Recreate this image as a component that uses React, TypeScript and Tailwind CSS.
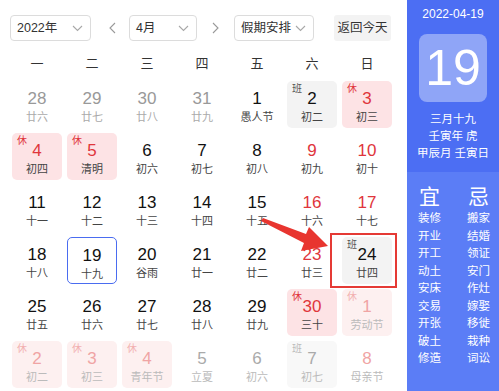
import React from "react";

type Cell = {
  d: string;
  l: string;
  kind?: "normal" | "prev" | "next";
  red?: boolean;
  tag?: "休" | "班";
  sel?: boolean;
};

const rows: Cell[][] = [
  [
    { d: "28", l: "廿六", kind: "prev" },
    { d: "29", l: "廿七", kind: "prev" },
    { d: "30", l: "廿八", kind: "prev" },
    { d: "31", l: "廿九", kind: "prev" },
    { d: "1", l: "愚人节" },
    { d: "2", l: "初二", tag: "班" },
    { d: "3", l: "初三", tag: "休", red: true },
  ],
  [
    { d: "4", l: "初四", tag: "休", red: true },
    { d: "5", l: "清明", tag: "休", red: true },
    { d: "6", l: "初六" },
    { d: "7", l: "初七" },
    { d: "8", l: "初八" },
    { d: "9", l: "初九", red: true },
    { d: "10", l: "初十", red: true },
  ],
  [
    { d: "11", l: "十一" },
    { d: "12", l: "十二" },
    { d: "13", l: "十三" },
    { d: "14", l: "十四" },
    { d: "15", l: "十五" },
    { d: "16", l: "十六", red: true },
    { d: "17", l: "十七", red: true },
  ],
  [
    { d: "18", l: "十八" },
    { d: "19", l: "十九", sel: true },
    { d: "20", l: "谷雨" },
    { d: "21", l: "廿一" },
    { d: "22", l: "廿二" },
    { d: "23", l: "廿三", red: true },
    { d: "24", l: "廿四", tag: "班" },
  ],
  [
    { d: "25", l: "廿五" },
    { d: "26", l: "廿六" },
    { d: "27", l: "廿七" },
    { d: "28", l: "廿八" },
    { d: "29", l: "廿九" },
    { d: "30", l: "三十", tag: "休", red: true },
    { d: "1", l: "劳动节", tag: "休", red: true, kind: "next" },
  ],
  [
    { d: "2", l: "初二", tag: "休", red: true, kind: "next" },
    { d: "3", l: "初三", tag: "休", red: true, kind: "next" },
    { d: "4", l: "青年节", tag: "休", red: true, kind: "next" },
    { d: "5", l: "立夏", kind: "next" },
    { d: "6", l: "初六", kind: "next" },
    { d: "7", l: "初七", tag: "班", kind: "next" },
    { d: "8", l: "母亲节", red: true, kind: "next" },
  ],
];

const yi = ["装修", "开业", "开工", "动土", "安床", "交易", "开张", "破土", "修造"];
const ji = ["搬家", "结婚", "领证", "安门", "作灶", "嫁娶", "移徙", "栽种", "词讼"];

function Chevron() {
  return (
    <svg width="11" height="7" viewBox="0 0 11 7" fill="none">
      <path d="M1 1l4.5 4.5L10 1" stroke="#a8a8a8" strokeWidth="1.1" />
    </svg>
  );
}

function DayCell({ c }: { c: Cell }) {
  const next = c.kind === "next";
  const prev = c.kind === "prev";
  let bg = "bg-white";
  if (c.tag === "休") bg = next ? "bg-[#fdf0f0]" : "bg-[#fde3e5]";
  else if (c.tag === "班") bg = next ? "bg-[#f8f8f8]" : "bg-[#f3f3f3]";
  let numColor = "text-[#111]";
  let lunColor = "text-[#444]";
  if (prev) {
    numColor = "text-[#999]";
    lunColor = "text-[#aaa]";
  } else if (next) {
    numColor = c.red ? "text-[#f0a4a4]" : "text-[#aaa]";
    lunColor = "text-[#bbb]";
  } else if (c.red) {
    numColor = "text-[#e0363c]";
  }
  const tagColor =
    c.tag === "休"
      ? next
        ? "text-[#f2b0b0]"
        : "text-[#e0363c]"
      : next
        ? "text-[#bbb]"
        : "text-[#555]";
  return (
    <div
      className={`relative h-[47px] w-[50px] rounded-[5px] flex flex-col items-center pt-[8px] ${bg} ${
        c.sel ? "border-[1.5px] border-[#4a6cf0] pt-[6.5px]" : ""
      }`}
    >
      {c.tag && (
        <span className={`absolute left-[5px] top-[2px] text-[10px] leading-[12px] ${tagColor}`}>
          {c.tag}
        </span>
      )}
      <span className={`text-[17px] leading-[20px] ${numColor}`}>{c.d}</span>
      <span className={`text-[11px] leading-[14px] mt-[1px] ${lunColor}`}>{c.l}</span>
    </div>
  );
}

export default function App() {
  return (
    <div
      className="w-[499px] h-[391px] bg-white flex overflow-hidden"
      style={{ fontFamily: '"Liberation Sans", "Noto Sans CJK SC", sans-serif' }}
    >
      <div className="relative flex-1 flex flex-col">
        {/* top bar */}
        <div className="flex items-center pt-[10px] pl-[10px] h-[36px] box-content">
          <div className="w-[81px] h-[26px] border border-[#dcdcdc] rounded-[4px] flex items-center justify-between pl-[6px] pr-[7px] text-[12.5px] text-[#333]">
            <span>2022年</span>
            <Chevron />
          </div>
          <span className="ml-[18px] text-[#999]">
            <svg width="7" height="12" viewBox="0 0 7 12" fill="none">
              <path d="M6 1L1 6l5 5" stroke="#999" strokeWidth="1.1" />
            </svg>
          </span>
          <div className="ml-[13px] w-[68px] h-[26px] border border-[#dcdcdc] rounded-[4px] flex items-center justify-between pl-[6px] pr-[7px] text-[12.5px] text-[#333]">
            <span>4月</span>
            <Chevron />
          </div>
          <span className="ml-[15px]">
            <svg width="7" height="12" viewBox="0 0 7 12" fill="none">
              <path d="M1 1l5 5-5 5" stroke="#999" strokeWidth="1.1" />
            </svg>
          </span>
          <div className="ml-[15px] w-[80px] h-[26px] border border-[#dcdcdc] rounded-[4px] flex items-center justify-between pl-[6px] pr-[7px] text-[12.5px] text-[#333]">
            <span>假期安排</span>
            <Chevron />
          </div>
          <div className="ml-[20px] w-[57px] h-[26px] rounded-[3px] bg-[#f3f3f3] flex items-center justify-center text-[12.5px] text-[#333]">
            返回今天
          </div>
        </div>
        {/* weekdays */}
        <div className="grid grid-cols-[repeat(7,50px)] gap-x-[5px] pl-[12px] h-[35px] items-center text-[13px] text-[#333]">
          {["一", "二", "三", "四", "五", "六", "日"].map((w) => (
            <div key={w} className="text-center">
              {w}
            </div>
          ))}
        </div>
        {/* days */}
        <div className="grid grid-cols-[repeat(7,50px)] gap-[5px] pl-[12px]">
          {rows.flat().map((c, i) => (
            <DayCell key={i} c={c} />
          ))}
        </div>

        {/* annotation box */}
        <div className="absolute left-[330px] top-[233px] w-[67px] h-[55px] border-[2.5px] border-[#e53a35]" />
        {/* annotation arrow */}
        <svg className="absolute left-0 top-0" width="407" height="391" viewBox="0 0 407 391">
          <polygon
            points="261,221 263,218 306,234 309,227 328,246 301,251 304,243"
            fill="#e8352f"
          />
        </svg>
      </div>

      {/* sidebar */}
      <div className="w-[92px] flex flex-col text-white">
        <div className="h-[172px] bg-[#4c6ef3] flex flex-col items-center">
          <div className="mt-[7px] text-[12px] leading-[14px]">2022-04-19</div>
          <div className="mt-[13px] w-[68px] h-[68px] rounded-[8px] bg-[#8fa5f7] flex items-center justify-center text-[50px] leading-none font-light" style={{ fontFamily: '"Liberation Sans", sans-serif' }}>
            19
          </div>
          <div className="mt-[9px] text-[11.5px] leading-[17px] text-center">
            <div>三月十九</div>
            <div>壬寅年 虎</div>
            <div>甲辰月 壬寅日</div>
          </div>
        </div>
        <div className="flex-1 bg-[#5b7df6] flex justify-center gap-[26px] pt-[12px] pl-[2px]">
          <div className="flex flex-col items-center">
            <div className="text-[21px] leading-[26px]">宜</div>
            {yi.map((t) => (
              <div key={t} className="text-[11.5px] leading-[17.5px]">
                {t}
              </div>
            ))}
          </div>
          <div className="flex flex-col items-center">
            <div className="text-[21px] leading-[26px]">忌</div>
            {ji.map((t) => (
              <div key={t} className="text-[11.5px] leading-[17.5px]">
                {t}
              </div>
            ))}
          </div>
        </div>
      </div>
    </div>
  );
}
